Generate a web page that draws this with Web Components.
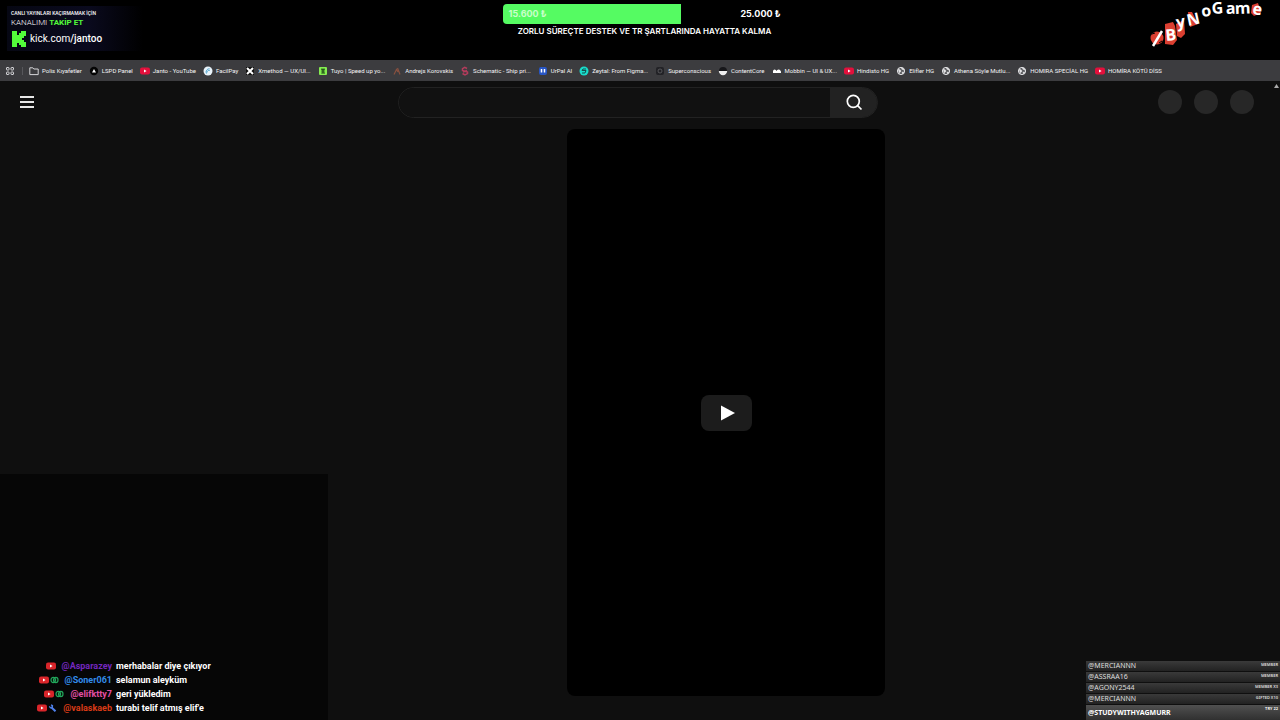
<!DOCTYPE html>
<html lang="tr">
<head>
<meta charset="utf-8">
<title>Janto – canlı yayın</title>
<style>
html, body { margin: 0; height: 100%; background: #0f0f0f; }
body { font-family: "Open Sans", sans-serif; color: #fff; overflow: hidden; }
</style>
</head>
<body>
<stream-page></stream-page>
<script>
const define = (name, html, setup) => {
  customElements.define(name, class extends HTMLElement {
    connectedCallback() {
      if (this.shadowRoot) return;
      const t = document.createElement('template');
      t.innerHTML = html;
      this.attachShadow({ mode: 'open' }).append(t.content.cloneNode(true));
      if (setup) setup(this, this.shadowRoot);
    }
  });
};

const YT = '<rect y="1.5" width="10" height="7" rx="2" fill="#e3103c"/><path d="M4 3.5v3L6.6 5z" fill="#fff"/>';
const GLOBE = '<circle cx="5" cy="5" r="3.6" fill="#55565a" stroke="#e4e4e6"/><path d="M2 3l2.5 1 .5 1.5-1.500 1L3 8M6 1.500L5.500 3l2 1L8.500 3.500M6 6l2 .3L6.500 8z" fill="#e4e4e6" stroke="#e4e4e6" stroke-width=".5"/>';
const ICONS = {
  folder: '<path d="M.8 1.800h3l1 1.200h4.400v5.600H.8z" fill="none" stroke="#d5d5d8"/>',
  lspd: '<circle cx="5" cy="5" r="4.200" fill="#050505"/><path d="M5 3l2 3.400H3z" fill="#fff"/>',
  yt: YT,
  facil: '<circle cx="5" cy="5" r="4.500" fill="#e9f3fa"/><path d="M3.500 7.500c-1-2 0-4.500 3-4.800M4 6.500c0-1.500 1-2.200 2.800-2.200" fill="none" stroke="#4ba3cf"/>',
  x: '<rect x="1" y="1" width="8" height="8" fill="#111"/><path d="M2 2l6 6M8 2L2 8" stroke="#fff" stroke-width="2"/>',
  tuyo: '<rect x="1" y="1" width="8" height="8" rx="1" fill="#85ed50"/><path d="M3 3.200h4M3.300 5H6.700M3.300 7H7M5 3v4" stroke="#163b12"/>',
  ak: '<path d="M2 8.500l2.500-5L6 6M5.500 2L8 8.500" fill="none" stroke="#87503f" stroke-width="1.200"/>',
  sch: '<path d="M7 2.500L4.800 1.300 2.500 2.700v1.700L7.500 6v1.600L5 9 2.500 7.500M7 4.500L3 6" fill="none" stroke="#b43c5c" stroke-width="1.500"/>',
  ur: '<rect x="1" y="1" width="8" height="8" rx="2" fill="#2856c5"/><path d="M3.500 3v3.500M6.500 3v3.500" stroke="#fff" stroke-width="1.500"/>',
  zey: '<circle cx="5" cy="5" r="4.500" fill="#19dccb"/><path d="M7 3H4L3 4.500h4L6 7H3" fill="none" stroke="#14504c"/>',
  sup: '<rect x="1" y="1" width="8" height="8" rx="2" fill="#222226"/><circle cx="5" cy="5" r="2" fill="none" stroke="#68686c" stroke-width=".7"/>',
  cc: '<circle cx="5" cy="5" r="4" fill="#17171a"/><path d="M.8 5h8.400a4.200 4.200 0 0 1-8.400 0z" fill="#eee"/>',
  mob: '<path d="M1 7V5.200Q1 3.500 2.700 3.500 4 3.500 4.500 5 5 3.500 6.500 3.500 9 3.500 9 7H6.500L5.500 6 4.500 7z" fill="#fff"/><path d="M1 5.500h8V7H1z" fill="#fff"/>',
  globe: GLOBE
};

/* A bookmark: icon, then its slotted title */
define('book-mark', `<style>
:host { display: block; flex: none; }
a { display: flex; align-items: center; gap: 3px; color: #f4f4f6; text-decoration: none; white-space: nowrap;
    font: 400 6px/10px Roboto, sans-serif; }
svg { width: 10px; height: 10px; flex: none; }
</style><a href="#"><svg viewBox="0 0 10 10" aria-hidden="true"></svg><span><slot></slot></span></a>`,
(el, r) => { r.querySelector('svg').innerHTML = ICONS[el.getAttribute('icon')]; });

define('bookmark-bar', `<style>
:host { display: flex; align-items: center; height: 21px; background: #3c3c3f; padding: 1px 6px 0; box-sizing: border-box; overflow: hidden; }
button { border: 0; background: none; padding: 0; width: 8px; height: 8px; display: flex; }
i { width: 1px; height: 8px; background: #57575b; margin: 0 6px 0 8px; }
nav { display: flex; gap: 7px; min-width: 0; }
</style>
<button aria-label="Uygulamalar"><svg width="8" height="8" viewBox="0 0 8 8" fill="none" stroke="#d5d5d8"><rect x=".5" y=".5" width="2.500" height="2.500" rx=".5"/><rect x="5" y=".5" width="2.500" height="2.500" rx=".5"/><rect x=".5" y="5" width="2.500" height="2.500" rx=".5"/><rect x="5" y="5" width="2.500" height="2.500" rx=".5"/></svg></button><i></i>
<nav>
<book-mark icon="folder">Polis Kıyafetler</book-mark>
<book-mark icon="lspd">LSPD Panel</book-mark>
<book-mark icon="yt">Janto - YouTube</book-mark>
<book-mark icon="facil">FacilPay</book-mark>
<book-mark icon="x">Xmethod — UX/UI...</book-mark>
<book-mark icon="tuyo">Tuyo | Speed up yo...</book-mark>
<book-mark icon="ak">Andrejs Korovskis</book-mark>
<book-mark icon="sch">Schematic - Ship pri...</book-mark>
<book-mark icon="ur">UrPal AI</book-mark>
<book-mark icon="zey">Zeytal: From Figma...</book-mark>
<book-mark icon="sup">Superconscious</book-mark>
<book-mark icon="cc">ContentCore</book-mark>
<book-mark icon="mob">Mobbin — UI &amp; UX...</book-mark>
<book-mark icon="yt">Hindisto HG</book-mark>
<book-mark icon="globe">Elifler HG</book-mark>
<book-mark icon="globe">Athena Söyle Mutlu...</book-mark>
<book-mark icon="globe">HOMIRA SPECİAL HG</book-mark>
<book-mark icon="yt">HOMİRA KÖTÜ DİSS</book-mark>
</nav>`);

define('kick-banner', `<style>
:host { display: block; box-sizing: border-box; width: 136px; height: 45px; padding: 4px 4px 0;
  background: linear-gradient(90deg, #060713, #0a0a1e 60%, #000); font-family: Roboto, sans-serif; white-space: nowrap; }
p { margin: 0; }
.a { font-size: 5px; line-height: 7px; font-weight: 500; }
.b { font-size: 8px; line-height: 12px; font-weight: 300; }
b { color: #53fc3a; font-weight: 700; }
a { display: flex; align-items: center; gap: 4px; height: 20px; color: #fff; text-decoration: none; font: 10px/20px Roboto, sans-serif; }
strong { font-weight: 500; }
</style>
<p class="a">CANLI YAYINLARI KAÇIRMAMAK İÇİN</p>
<p class="b">KANALIMI <b>TAKİP ET</b></p>
<a href="#"><svg width="15" height="16" viewBox="0 0 15 16" aria-hidden="true"><path d="M1 0h5v4h2V2h2V0h5v5h-2v2h-2v2h2v2h2v5h-5v-2H8v-2H6v4H1z" fill="#53fc3a"/></svg><span>kick.com<strong>/jantoo</strong></span></a>`);

define('donation-goal', `<style>
:host { display: block; width: 278px; font-family: Inter, sans-serif; text-align: center; }
.bar { display: flex; justify-content: space-between; align-items: center; height: 20px; border-radius: 4px; padding-left: 6px; box-sizing: border-box;
  background: linear-gradient(90deg, #55fb62 64%, transparent 64%); font: 700 9px/20px Inter, sans-serif; }
.now { color: #c8ffc9; }
p { margin: 0 0 0 6px; font: 600 8px/14px Inter, sans-serif; white-space: nowrap; }
</style>
<div class="bar"><span class="now">15.600 ₺</span><span>25.000 ₺</span></div>
<p>ZORLU SÜREÇTE DESTEK VE TR ŞARTLARINDA HAYATTA KALMA</p>`);

/* Wavy sponsor lettering, each glyph turned along the curve */
define('sponsor-logo', `<style>
:host { display: block; width: 120px; height: 50px; }
svg { display: block; }
text { font: 700 16px "Open Sans", sans-serif; fill: #fff; }
</style>
<svg width="120" height="50" viewBox="0 0 120 50" role="img" aria-label="ByNoGame">
<circle cx="7" cy="38" r="6.500" fill="#db3f31"/><path d="M3 46L12 31" stroke="#fff" stroke-width="2.500"/><path d="M2 34l3-1M9 43l3-2" stroke="#000"/>
<path d="M15 24l8-2 2 4 2 14-4 5-8-1z" fill="#db3f31"/><path d="M26 24l8-4 1 14-4 4-4-2z" fill="#db3f31"/><path d="M38 12l4 0 6 12-8 3z" fill="#db3f31"/><path d="M102 5l6-2 3 10-7 3-3-3z" fill="#db3f31"/>
<text x="16 27 38 52 62 76 85 102" y="41 28 26 17 14 14 14 14" rotate="-6 -10 -12 -8 -4 -2 -2 8">ByNoGame</text>
</svg>`);

define('stream-bar', `<style>
:host { display: grid; grid-template-columns: 1fr auto 1fr; height: 60px; background: #000; }
kick-banner { margin: 6px 0 0 7px; }
donation-goal { margin: 4px 0 0 3px; }
sponsor-logo { justify-self: end; margin-right: 10px; }
</style><kick-banner></kick-banner><donation-goal></donation-goal><sponsor-logo></sponsor-logo>`);

define('app-header', `<style>
:host { display: grid; grid-template-columns: 1fr 480px 1fr; align-items: center; height: 42px; padding: 0 26px 0 20px; }
button { border: 0; background: none; padding: 0; color: #fff; }
.menu { width: 14px; height: 14px; display: flex; }
form { display: flex; height: 31px; margin: 0 -1px 0 1px; box-sizing: border-box; border: 1px solid #222; border-radius: 16px; overflow: hidden; }
input { flex: 1; min-width: 0; border: 0; outline: 0; background: #111; color: #fff; padding: 0 16px; font: 12px Roboto, sans-serif; }
.go { width: 47px; background: #222; display: flex; align-items: center; justify-content: center; }
.dots { display: flex; gap: 12px; justify-content: flex-end; }
.dots button { width: 24px; height: 24px; border-radius: 50%; background: #272727; }
</style>
<button class="menu" aria-label="Menü"><svg width="14" height="14" viewBox="0 0 14 14" stroke="#e6e6e6" stroke-width="2"><path d="M0 2h14M0 7h14M0 12h14"/></svg></button>
<form role="search"><input type="text" aria-label="Ara"><button class="go" type="button" aria-label="Ara"><svg width="18" height="18" viewBox="0 0 18 18" fill="none" stroke="#fff" stroke-width="1.700"><circle cx="8.300" cy="8.300" r="6"/><path d="M12.600 12.600l3.900 3.900"/></svg></button></form>
<div class="dots"><button aria-label="Oluştur"></button><button aria-label="Bildirimler"></button><button aria-label="Hesap"></button></div>`);

define('shorts-player', `<style>
:host { display: flex; align-items: center; justify-content: center; height: 100%; aspect-ratio: 318 / 567; background: #000; border-radius: 8px; }
button { width: 51px; height: 36px; border: 0; border-radius: 8px; background: #1c1c1c; padding: 0 0 0 4px; display: flex; align-items: center; justify-content: center; }
</style><button aria-label="Oynat"><svg width="14" height="16" viewBox="0 0 14 16"><path d="M0 .5v15L14 8z" fill="#fff"/></svg></button>`);

define('chat-line', `<style>
:host { display: grid; grid-template-columns: 112px 1fr; gap: 4px; font: 700 9px/14px Roboto, sans-serif; white-space: nowrap; }
.who { display: flex; justify-content: flex-end; align-items: center; gap: 1px; }
.name { color: var(--name); margin-left: 5px; font-weight: 700; }
svg { height: 8px; flex: none; }
</style><span class="who"><svg width="10" height="8" viewBox="0 0 10 8"><rect y=".5" width="10" height="7" rx="2" fill="#d9252a"/><path d="M4 2.500v3L6.600 4z" fill="#fff"/></svg><span class="name"></span></span><span><slot></slot></span>`,
(el, r) => {
  r.querySelector('.name').textContent = el.getAttribute('name');
  el.style.setProperty('--name', el.getAttribute('color'));
  const badge = {
    member: '<svg width="9" height="8" viewBox="0 0 9 8" fill="none" stroke="#22a65b" stroke-width="1.200"><ellipse cx="3.200" cy="4" rx="2.200" ry="2.600"/><ellipse cx="5.800" cy="4" rx="2.200" ry="2.600"/><path d="M3.500 3v2M5.500 3v2"/></svg>',
    mod: '<svg width="9" height="8" viewBox="0 0 9 8"><path d="M3 3l4.500 4.300" stroke="#4f80ec" stroke-width="2"/><path d="M1.300 2.300l1.200 1.500 1.800-.3.200-1.800L3 .9" fill="none" stroke="#4f80ec" stroke-width="1.300"/></svg>'
  }[el.getAttribute('badge')];
  if (badge) r.querySelector('.name').insertAdjacentHTML('beforebegin', badge);
});

define('chat-overlay', `<style>
:host { display: flex; flex-direction: column; justify-content: flex-end; background: #060606; padding-bottom: 5px; box-sizing: border-box; }
</style>
<chat-line name="@Asparazey" color="#7327bd">merhabalar diye çıkıyor</chat-line>
<chat-line name="@Soner061" color="#328be8" badge="member">selamun aleyküm</chat-line>
<chat-line name="@elifktty7" color="#e34fa4" badge="member">geri yükledim</chat-line>
<chat-line name="@valaskaeb" color="#d93a16" badge="mod">turabi telif atmış elif'e</chat-line>`);

define('event-row', `<style>
:host { display: flex; justify-content: space-between; height: 10px; padding: 0 2px; background: linear-gradient(#3a3a3a, #222); color: #ddd;
  font: 7px/10px "Noto Sans", sans-serif; white-space: nowrap; }
:host([latest]) { height: 15px; background: linear-gradient(#505050, #303030); color: #fff; font-weight: 700; line-height: 15px; }
small { font-size: 4px; line-height: 8px; font-weight: 600; }
</style><span><slot></slot></span><small></small>`,
(el, r) => { r.querySelector('small').textContent = el.getAttribute('kind'); });

define('event-list', `<style>
:host { display: flex; flex-direction: column; gap: 1px; width: 194px; }
</style>
<event-row kind="MEMBER">@MERCIANNN</event-row>
<event-row kind="MEMBER">@ASSRAA16</event-row>
<event-row kind="MEMBER X3">@AGONY2544</event-row>
<event-row kind="GIFTED X10">@MERCIANNN</event-row>
<event-row kind="TRY 22" latest>@STUDYWITHYAGMURR</event-row>`);

define('stream-page', `<style>
:host { display: flex; flex-direction: column; height: 100vh; position: relative; }
main { flex: 1; min-height: 0; display: flex; justify-content: center; padding: 6px 0 24px 172px; box-sizing: border-box; }
chat-overlay { position: absolute; left: 0; bottom: 0; width: 328px; height: 246px; }
event-list { position: absolute; right: 0; bottom: 0; }
.up { position: absolute; right: 1px; top: 84px; width: 5px; height: 4px; }
</style>
<stream-bar></stream-bar>
<bookmark-bar></bookmark-bar>
<app-header></app-header>
<main><shorts-player></shorts-player></main>
<chat-overlay></chat-overlay>
<event-list></event-list>
<svg class="up" viewBox="0 0 5 4" aria-hidden="true"><path d="M2.500 0L5 4H0z" fill="#aaa"/></svg>`);
</script>
</body>
</html>
